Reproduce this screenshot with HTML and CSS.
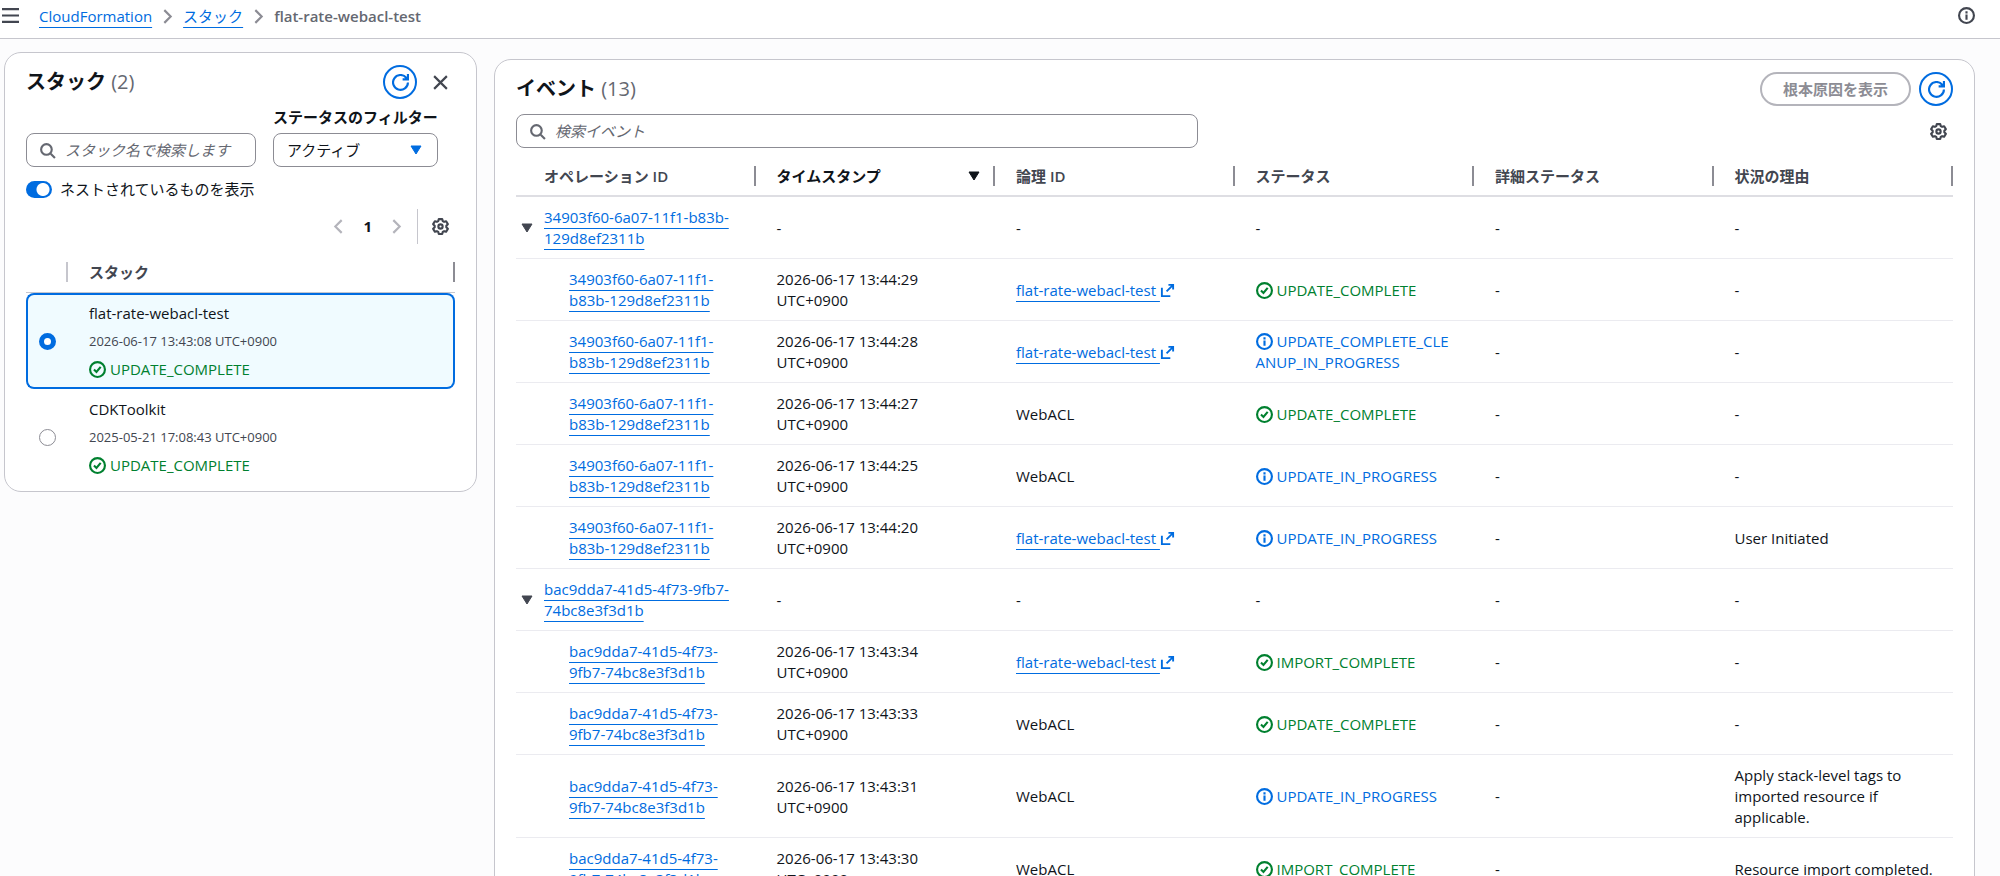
FILE: index.html
```html
<!DOCTYPE html>
<html lang="ja">
<head>
    <meta charset="UTF-8">
    <meta name="viewport" content="width=device-width, initial-scale=1.0">
    <title>CloudFormation - flat-rate-webacl-test</title>
    <link rel="stylesheet" href="styles.css">
</head>
<body>
    <!-- icons -->
    <svg class="sprite" aria-hidden="true">
        <symbol id="i-menu" viewBox="0 0 16 16"><path d="M0 2h16M0 8h16M0 14h16"/></symbol>
        <symbol id="i-right" viewBox="0 0 16 16"><path d="M5 2l6 6-6 6"/></symbol>
        <symbol id="i-left" viewBox="0 0 16 16"><path d="M11 2L5 8l6 6"/></symbol>
        <symbol id="i-close" viewBox="0 0 16 16"><path d="M2 2l12 12M14 2L2 14"/></symbol>
        <symbol id="i-refresh" viewBox="0 0 16 16"><path d="M15 8a7 7 0 1 1-1.6-4.5L15 5M15 0v5h-5"/></symbol>
        <symbol id="i-search" viewBox="0 0 16 16"><circle cx="7" cy="7" r="5"/><path d="M11 11l4 4"/></symbol>
        <symbol id="i-gear" viewBox="0 0 16 16"><path d="M6.400 1h3.200l.5 1.900 1.300.7 1.900-.5 1.600 2.700L13.500 7.200v1.600l1.400 1.400-1.600 2.700-1.900-.5-1.300.7-.5 1.900H6.400l-.5-1.900-1.300-.7-1.900.5-1.600-2.700L2.500 8.800V7.200L1.100 5.800l1.600-2.700 1.900.5 1.300-.7z" stroke-linejoin="round"/><circle cx="8" cy="8" r="2"/></symbol>
        <symbol id="i-info" viewBox="0 0 16 16"><circle cx="8" cy="8" r="7"/><path d="M8 7v5M8 4v2"/></symbol>
        <symbol id="i-ok" viewBox="0 0 16 16"><circle cx="8" cy="8" r="7"/><path d="M4.700 8l2.300 2.300L11 5.500"/></symbol>
        <symbol id="i-ext" viewBox="0 0 16 16"><path d="M9 2h5v5M14 2L7 9M2 5v9h9"/></symbol>
        <symbol id="i-caret" viewBox="0 0 12 10"><path d="M1 1h10L6 9z" fill="currentColor" stroke-width="1" stroke-linejoin="round"/></symbol>
    </svg>

    <header class="topbar">
        <button class="icon-btn" aria-label="メニュー"><svg class="icon"><use href="#i-menu"/></svg></button>
        <nav class="breadcrumb">
            <a href="#">CloudFormation</a>
            <svg class="icon sep"><use href="#i-right"/></svg>
            <a href="#">スタック</a>
            <svg class="icon sep"><use href="#i-right"/></svg>
            <span class="current">flat-rate-webacl-test</span>
        </nav>
        <button class="icon-btn" aria-label="情報"><svg class="icon"><use href="#i-info"/></svg></button>
    </header>

    <main class="content">
        <section class="panel stacks">
            <div class="panel-head">
                <h2>スタック <span class="count">(2)</span></h2>
                <div class="actions">
                    <button class="round-btn" aria-label="更新"><svg class="icon"><use href="#i-refresh"/></svg></button>
                    <button class="icon-btn" aria-label="閉じる"><svg class="icon"><use href="#i-close"/></svg></button>
                </div>
            </div>
            <div class="filters">
                <div class="search">
                    <svg class="icon"><use href="#i-search"/></svg>
                    <input type="text" placeholder="スタック名で検索します" aria-label="スタック名で検索します">
                </div>
                <div class="status-filter">
                    <label for="status">ステータスのフィルター</label>
                    <div class="select">
                        <select id="status"><option>アクティブ</option></select>
                        <svg class="caret"><use href="#i-caret"/></svg>
                    </div>
                </div>
            </div>
            <label class="toggle"><input type="checkbox" role="switch" checked>ネストされているものを表示</label>
            <div class="pager">
                <div class="pages">
                    <button class="icon-btn" aria-label="前へ" disabled><svg class="icon"><use href="#i-left"/></svg></button>
                    <button class="page">1</button>
                    <button class="icon-btn" aria-label="次へ" disabled><svg class="icon"><use href="#i-right"/></svg></button>
                </div>
                <div class="prefs">
                    <button class="icon-btn" aria-label="設定"><svg class="icon"><use href="#i-gear"/></svg></button>
                </div>
            </div>
            <table class="stack-table">
                <thead>
                    <tr>
                        <th class="pick"><div class="th light"></div></th>
                        <th><div class="th">スタック</div></th>
                    </tr>
                </thead>
                <tbody>
                    <tr class="selected">
                        <td><input type="radio" name="stack" aria-label="flat-rate-webacl-test" checked></td>
                        <td>
                            <div class="stack">
                                <span>flat-rate-webacl-test</span>
                                <span class="time">2026-06-17 13:43:08 UTC+0900</span>
                                <span class="status ok"><svg class="icon"><use href="#i-ok"/></svg>UPDATE_COMPLETE</span>
                            </div>
                        </td>
                    </tr>
                    <tr>
                        <td><input type="radio" name="stack" aria-label="CDKToolkit"></td>
                        <td>
                            <div class="stack">
                                <span>CDKToolkit</span>
                                <span class="time">2025-05-21 17:08:43 UTC+0900</span>
                                <span class="status ok"><svg class="icon"><use href="#i-ok"/></svg>UPDATE_COMPLETE</span>
                            </div>
                        </td>
                    </tr>
                </tbody>
            </table>
        </section>

        <section class="panel events">
            <div class="panel-head">
                <h2>イベント <span class="count">(13)</span></h2>
                <div class="actions">
                    <button class="pill-btn" disabled>根本原因を表示</button>
                    <button class="round-btn" aria-label="更新"><svg class="icon"><use href="#i-refresh"/></svg></button>
                </div>
            </div>
            <div class="tools">
                <div class="search">
                    <svg class="icon"><use href="#i-search"/></svg>
                    <input type="text" placeholder="検索イベント" aria-label="検索イベント">
                </div>
                <button class="icon-btn" aria-label="設定"><svg class="icon"><use href="#i-gear"/></svg></button>
            </div>
            <table class="event-table">
                <thead>
                    <tr>
                        <th><div class="th">オペレーション ID</div></th>
                        <th class="sorted"><div class="th">タイムスタンプ<svg class="caret"><use href="#i-caret"/></svg></div></th>
                        <th><div class="th">論理 ID</div></th>
                        <th><div class="th">ステータス</div></th>
                        <th><div class="th">詳細ステータス</div></th>
                        <th><div class="th">状況の理由</div></th>
                    </tr>
                </thead>
                <tbody>
                    <tr class="group">
                        <td><div class="op"><button class="expand" aria-label="折りたたむ"><svg class="caret"><use href="#i-caret"/></svg></button><a href="#">34903f60-6a07-11f1-b83b-129d8ef2311b</a></div></td>
                        <td>-</td><td>-</td><td>-</td><td>-</td><td>-</td>
                    </tr>
                    <tr>
                        <td><a href="#">34903f60-6a07-11f1-b83b-129d8ef2311b</a></td>
                        <td>2026-06-17 13:44:29 UTC+0900</td>
                        <td><a href="#">flat-rate-webacl-test <svg class="icon ext"><use href="#i-ext"/></svg></a></td>
                        <td class="status ok"><svg class="icon"><use href="#i-ok"/></svg>UPDATE_COMPLETE</td>
                        <td>-</td><td>-</td>
                    </tr>
                    <tr>
                        <td><a href="#">34903f60-6a07-11f1-b83b-129d8ef2311b</a></td>
                        <td>2026-06-17 13:44:28 UTC+0900</td>
                        <td><a href="#">flat-rate-webacl-test <svg class="icon ext"><use href="#i-ext"/></svg></a></td>
                        <td class="status info"><svg class="icon"><use href="#i-info"/></svg>UPDATE_COMPLETE_CLEANUP_IN_PROGRESS</td>
                        <td>-</td><td>-</td>
                    </tr>
                    <tr>
                        <td><a href="#">34903f60-6a07-11f1-b83b-129d8ef2311b</a></td>
                        <td>2026-06-17 13:44:27 UTC+0900</td>
                        <td>WebACL</td>
                        <td class="status ok"><svg class="icon"><use href="#i-ok"/></svg>UPDATE_COMPLETE</td>
                        <td>-</td><td>-</td>
                    </tr>
                    <tr>
                        <td><a href="#">34903f60-6a07-11f1-b83b-129d8ef2311b</a></td>
                        <td>2026-06-17 13:44:25 UTC+0900</td>
                        <td>WebACL</td>
                        <td class="status info"><svg class="icon"><use href="#i-info"/></svg>UPDATE_IN_PROGRESS</td>
                        <td>-</td><td>-</td>
                    </tr>
                    <tr>
                        <td><a href="#">34903f60-6a07-11f1-b83b-129d8ef2311b</a></td>
                        <td>2026-06-17 13:44:20 UTC+0900</td>
                        <td><a href="#">flat-rate-webacl-test <svg class="icon ext"><use href="#i-ext"/></svg></a></td>
                        <td class="status info"><svg class="icon"><use href="#i-info"/></svg>UPDATE_IN_PROGRESS</td>
                        <td>-</td><td>User Initiated</td>
                    </tr>
                    <tr class="group">
                        <td><div class="op"><button class="expand" aria-label="折りたたむ"><svg class="caret"><use href="#i-caret"/></svg></button><a href="#">bac9dda7-41d5-4f73-9fb7-74bc8e3f3d1b</a></div></td>
                        <td>-</td><td>-</td><td>-</td><td>-</td><td>-</td>
                    </tr>
                    <tr>
                        <td><a href="#">bac9dda7-41d5-4f73-9fb7-74bc8e3f3d1b</a></td>
                        <td>2026-06-17 13:43:34 UTC+0900</td>
                        <td><a href="#">flat-rate-webacl-test <svg class="icon ext"><use href="#i-ext"/></svg></a></td>
                        <td class="status ok"><svg class="icon"><use href="#i-ok"/></svg>IMPORT_COMPLETE</td>
                        <td>-</td><td>-</td>
                    </tr>
                    <tr>
                        <td><a href="#">bac9dda7-41d5-4f73-9fb7-74bc8e3f3d1b</a></td>
                        <td>2026-06-17 13:43:33 UTC+0900</td>
                        <td>WebACL</td>
                        <td class="status ok"><svg class="icon"><use href="#i-ok"/></svg>UPDATE_COMPLETE</td>
                        <td>-</td><td>-</td>
                    </tr>
                    <tr>
                        <td><a href="#">bac9dda7-41d5-4f73-9fb7-74bc8e3f3d1b</a></td>
                        <td>2026-06-17 13:43:31 UTC+0900</td>
                        <td>WebACL</td>
                        <td class="status info"><svg class="icon"><use href="#i-info"/></svg>UPDATE_IN_PROGRESS</td>
                        <td>-</td><td>Apply stack-level tags to imported resource if applicable.</td>
                    </tr>
                    <tr>
                        <td><a href="#">bac9dda7-41d5-4f73-9fb7-74bc8e3f3d1b</a></td>
                        <td>2026-06-17 13:43:30 UTC+0900</td>
                        <td>WebACL</td>
                        <td class="status ok"><svg class="icon"><use href="#i-ok"/></svg>IMPORT_COMPLETE</td>
                        <td>-</td><td>Resource import completed.</td>
                    </tr>
                </tbody>
            </table>
        </section>
    </main>
</body>
</html>
```
FILE: styles.css
```css
:root {
    --blue: #006ce0;
    --green: #00802f;
    --text: #0f141a;
    --muted: #656871;
    --heading: #424650;
    --border: #c6c6cd;
    --field: #8c8c94;
    --line: #ebebf0;
}

* {
    box-sizing: border-box;
}
body {
    display: flex;
    flex-direction: column;
    height: 100vh;
    margin: 0;
    overflow: hidden;
    background: #fcfcfd;
    color: var(--text);
    font-family: "Open Sans", "Noto Sans CJK JP", sans-serif;
    font-size: 15px;
    line-height: 21px;
}
button, input, select {
    font: inherit;
    color: inherit;
}
button {
    padding: 0;
    border: none;
    background: none;
    cursor: pointer;
}
a {
    color: var(--blue);
    text-decoration: underline;
    text-decoration-thickness: 1px;
    text-underline-offset: 5px;
}
.sprite {
    display: none;
}
.icon {
    width: 17px;
    height: 17px;
    flex: none;
    fill: none;
    stroke: currentColor;
    stroke-width: 2;
}
.caret {
    width: 12px;
    height: 10px;
    flex: none;
    stroke: currentColor;
}
.icon-btn {
    display: flex;
    color: var(--heading);
}
.icon-btn:disabled {
    color: #b4b4bb;
}

/* top bar */
.topbar {
    display: flex;
    align-items: center;
    flex: none;
    height: 39px;
    padding: 0 25px 8px 2px;
    background: #fff;
    border-bottom: 1px solid var(--border);
}
.breadcrumb {
    display: flex;
    flex: 1;
    align-items: center;
    gap: 7px;
    padding: 2px 0 0 20px;
}
.breadcrumb .sep {
    color: var(--field);
}
.current {
    color: var(--muted);
    font-weight: 600;
}

/* panels */
.content {
    display: flex;
    flex: 1;
    align-items: flex-start;
    gap: 17px;
    min-height: 0;
    padding: 0 25px 0 4px;
}
.panel {
    background: #fff;
    border: 1px solid var(--border);
    border-radius: 17px;
    padding: 12px 21px 6px;
}
.stacks {
    flex: none;
    width: 473px;
    margin-top: 13px;
}
.events {
    flex: 1;
    min-width: 0;
    margin-top: 20px;
}
.panel-head {
    display: flex;
    align-items: center;
    justify-content: space-between;
    height: 34px;
}
h2 {
    margin: 0;
    font-size: 20px;
    line-height: 24px;
}
.count {
    color: var(--muted);
    font-weight: 400;
}
.actions {
    display: flex;
    align-items: center;
    gap: 8px;
}
.stacks .actions {
    gap: 15px;
    padding-right: 6px;
}
.round-btn {
    display: flex;
    align-items: center;
    justify-content: center;
    width: 34px;
    height: 34px;
    border: 2px solid var(--blue);
    border-radius: 50%;
    color: var(--blue);
}
.pill-btn {
    height: 34px;
    padding: 0 21px;
    border: 2px solid #b4b4bb;
    border-radius: 17px;
    color: var(--field);
    font-weight: 600;
}

/* form controls */
.search {
    display: flex;
    align-items: center;
    flex: 1;
    gap: 9px;
    min-width: 0;
    height: 34px;
    padding: 0 12px;
    border: 1px solid var(--field);
    border-radius: 8px;
    background: #fff;
    color: var(--muted);
}
.search input {
    flex: 1;
    min-width: 0;
    padding: 0;
    border: none;
    outline: none;
    background: none;
}
.search input::placeholder {
    color: var(--muted);
    font-style: italic;
    opacity: 1;
}
.filters {
    display: flex;
    align-items: flex-end;
    gap: 17px;
    padding: 8px 17px 0 0;
}
.status-filter {
    width: 165px;
}
.status-filter label {
    display: block;
    margin-bottom: 5px;
    font-weight: 600;
    white-space: nowrap;
}
.select {
    display: grid;
    align-items: center;
}
.select select, .select .caret {
    grid-area: 1 / 1;
}
.select select {
    width: 100%;
    height: 34px;
    padding: 0 13px;
    border: 1px solid var(--field);
    border-radius: 8px;
    background: #fff;
    appearance: none;
}
.select .caret {
    justify-self: end;
    margin-right: 16px;
    color: var(--blue);
    pointer-events: none;
}
.toggle {
    display: flex;
    align-items: center;
    gap: 8px;
    margin-top: 12px;
}
.toggle input {
    width: 26px;
    height: 17px;
    margin: 0;
    border-radius: 9px;
    appearance: none;
    background: radial-gradient(circle at 17px 50%, #fff 6px, var(--blue) 7px);
}
.pager {
    display: flex;
    align-items: center;
    justify-content: flex-end;
    gap: 12px;
    margin: 9px 0 8px;
    padding-right: 6px;
}
.pages {
    display: flex;
    align-items: center;
    gap: 16px;
}
.page {
    font-weight: 700;
}
.prefs {
    display: flex;
    align-items: center;
    height: 35px;
    padding-left: 14px;
    border-left: 1px solid var(--border);
}

/* tables */
table {
    width: 100%;
    border-collapse: separate;
    border-spacing: 0;
    table-layout: fixed;
}
th, td {
    text-align: left;
}
th {
    color: var(--heading);
    font-weight: 600;
}
.th {
    display: flex;
    align-items: center;
    justify-content: space-between;
    height: 20px;
    border-right: 2px solid var(--field);
}
.th.light {
    border-color: var(--border);
}
.status .icon {
    margin-right: 4px;
    vertical-align: -3px;
}
.ok {
    color: var(--green);
}
.info {
    color: var(--blue);
}

.stack-table th {
    padding: 10px 0 10px 21px;
    border-bottom: 1px solid var(--border);
}
.stack-table .pick {
    width: 42px;
}
.stack-table td {
    padding: 8px 0 7px 21px;
    border: solid transparent;
    border-width: 2px 0;
}
.stack-table td:first-child {
    padding-left: 11px;
    border-left-width: 2px;
    border-radius: 8px 0 0 8px;
}
.stack-table td:last-child {
    border-right-width: 2px;
    border-radius: 0 8px 8px 0;
}
.stack-table .selected td {
    background: #f0fbff;
    border-color: var(--blue);
}
.stack-table input {
    display: block;
    width: 17px;
    height: 17px;
    margin: 0;
    border: 1px solid var(--field);
    border-radius: 50%;
    background: #fff;
    appearance: none;
}
.stack-table input:checked {
    border: 5px solid var(--blue);
}
.stack {
    display: flex;
    flex-direction: column;
    gap: 7px;
}
.time {
    color: var(--heading);
    font-size: 13px;
}

.tools {
    display: flex;
    align-items: center;
    justify-content: space-between;
    margin-top: 8px;
    padding-right: 6px;
}
.tools .search {
    max-width: 682px;
}
.event-table th {
    padding: 18px 0 9px 21px;
    border-bottom: 2px solid #dedee3;
}
.event-table th:first-child {
    padding-left: 28px;
}
.event-table .sorted {
    color: var(--text);
}
.sorted .caret {
    margin-right: 13px;
}
.event-table td {
    padding: 10px 20px 9px 21px;
    border-bottom: 1px solid var(--line);
}
.event-table td:first-child {
    padding-left: 53px;
}
.event-table td:last-child {
    padding-right: 8px;
}
.event-table .group td:first-child {
    padding-left: 5px;
}
.event-table .status {
    word-break: break-all;
}
.op {
    display: flex;
    align-items: center;
    gap: 11px;
}
.expand {
    display: flex;
    color: var(--heading);
}
.ext {
    width: 15px;
    height: 15px;
    vertical-align: -2px;
}
```
